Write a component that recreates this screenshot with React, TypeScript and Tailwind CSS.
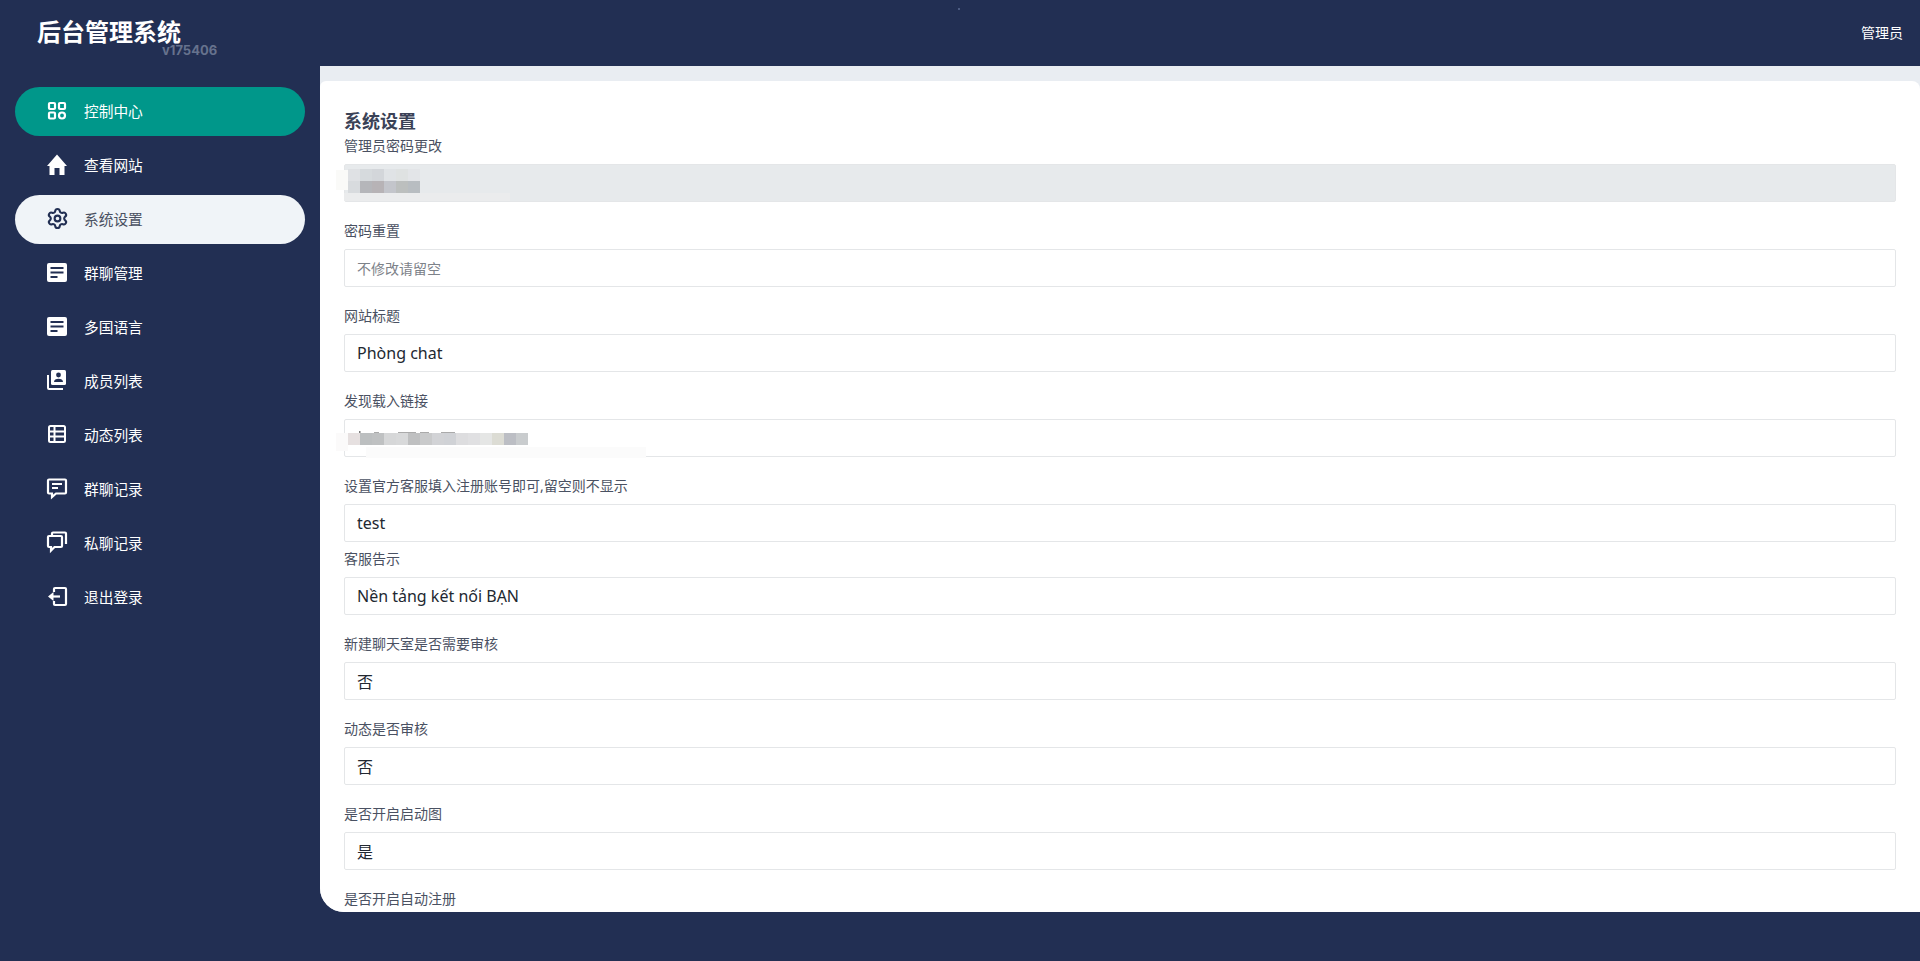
import { ReactNode } from "react";
import { Settings } from "lucide-react";

const NAVY = "#222f53";

function DashboardIcon() {
	return (
		<svg viewBox="0 0 24 24" fill="none" stroke="currentColor" strokeWidth="2.2" className="h-6 w-6">
			<rect x="4" y="3" width="6" height="6" rx="1" />
			<rect x="14" y="3" width="6" height="6" rx="1" />
			<rect x="4" y="12.5" width="6" height="6" rx="1" />
			<circle cx="17" cy="15.5" r="3" />
		</svg>
	);
}

function HomeIcon() {
	return (
		<svg viewBox="0 0 24 24" fill="currentColor" className="h-6 w-6">
			<path d="M9.5 21v-7h5v7h5v-9H22L12 .5 2 12h2.5v9z" />
		</svg>
	);
}

function ArticleIcon() {
	return (
		<svg viewBox="0 0 24 24" className="h-6 w-6">
			<rect x="2" y="1" width="20" height="19" rx="2" fill="currentColor" />
			<rect x="5.5" y="5" width="13" height="2" fill={NAVY} />
			<rect x="5.5" y="9.5" width="13" height="2" fill={NAVY} />
			<rect x="5.5" y="14" width="7" height="2" fill={NAVY} />
		</svg>
	);
}

function MembersIcon() {
	return (
		<svg viewBox="0 0 24 24" className="h-6 w-6">
			<path d="M3 5v13a1 1 0 0 0 1 1h14" fill="none" stroke="currentColor" strokeWidth="2" />
			<rect x="6" y="0" width="15" height="15" rx="1.5" fill="currentColor" />
			<circle cx="13.5" cy="5" r="2.4" fill={NAVY} />
			<path d="M9 12c0-2.2 2-3.2 4.500-3.200s4.500 1 4.500 3.200z" fill={NAVY} />
		</svg>
	);
}

function ListIcon() {
	return (
		<svg viewBox="0 0 24 24" fill="none" stroke="currentColor" strokeWidth="2" className="h-6 w-6">
			<rect x="4" y="2" width="16" height="16" rx="1.5" />
			<path d="M9.500 2v16" />
			<path d="M4 7.500h16M4 12.500h16" strokeWidth="1.800" />
		</svg>
	);
}

function ChatIcon() {
	return (
		<svg viewBox="0 0 24 24" fill="none" stroke="currentColor" strokeWidth="2.2" className="h-6 w-6">
			<path d="M4 1.500h16a1 1 0 0 1 1 1v12a1 1 0 0 1-1 1h-9l-4 3.500v-3.500H4a1 1 0 0 1-1-1v-12a1 1 0 0 1 1-1z" />
			<path d="M7 6h10M7 10h6" />
		</svg>
	);
}

function PrivateChatIcon() {
	return (
		<svg viewBox="0 0 24 24" fill="none" stroke="currentColor" strokeWidth="2.2" className="h-6 w-6 overflow-visible">
			<path d="M7 3V1.500a1 1 0 0 1 1-1h12a1 1 0 0 1 1 1V12" />
			<path d="M4 4h12a1 1 0 0 1 1 1v9a1 1 0 0 1-1 1H9.500L6 18.500V15H4a1 1 0 0 1-1-1V5a1 1 0 0 1 1-1z" />
		</svg>
	);
}

function LogoutIcon() {
	return (
		<svg viewBox="0 0 24 24" fill="none" stroke="currentColor" strokeWidth="2.2" className="h-6 w-6">
			<path d="M9 6V3a1 1 0 0 1 1-1h10a1 1 0 0 1 1 1v15a1 1 0 0 1-1 1H10a1 1 0 0 1-1-1v-3" />
			<path d="M15 10.500H7" />
			<path d="M8.500 6L3 10.500 8.500 15z" fill="currentColor" stroke="none" />
		</svg>
	);
}

const menu: { label: string; icon: ReactNode; state?: "primary" | "current" }[] = [
	{ label: "控制中心", icon: <DashboardIcon />, state: "primary" },
	{ label: "查看网站", icon: <HomeIcon /> },
	{ label: "系统设置", icon: <Settings className="h-[23px] w-[23px] -translate-y-px" strokeWidth={2.2} />, state: "current" },
	{ label: "群聊管理", icon: <ArticleIcon /> },
	{ label: "多国语言", icon: <ArticleIcon /> },
	{ label: "成员列表", icon: <MembersIcon /> },
	{ label: "动态列表", icon: <ListIcon /> },
	{ label: "群聊记录", icon: <ChatIcon /> },
	{ label: "私聊记录", icon: <PrivateChatIcon /> },
	{ label: "退出登录", icon: <LogoutIcon /> },
];

// pixelated patches that cover the password and the link
const passwordPatch = [
	["#dfe1e4", "#d6dadd", "#d3d6da", "#e0e3e6", "#dfe2e2", "#e3e5e8"],
	["#d8dbde", "#b5b6ba", "#b7b3b6", "#c3c5cb", "#bcbfbe", "#b8bdc1"],
];
const linkPatch = ["#e6e0e0", "#bcbfc0", "#bfc1c2", "#d6d7d8", "#d8d9da", "#bfc0c1", "#c9cacb", "#d2d3d6", "#d0d2d6", "#dddddf", "#e0e0e2", "#e5e6e5", "#dcdcd4", "#bcbec4", "#c9ccce"];

function PasswordMosaic() {
	return (
		<svg className="pointer-events-none absolute -left-2 top-0 h-[38px] w-[190px]" viewBox="0 0 190 38">
			<rect x="0" y="6" width="12" height="20" fill="#fafaf8" />
			<rect x="8" y="29" width="166" height="8" fill="#ebeced" />
			{passwordPatch.map((row, r) =>
				row.map((c, i) => <rect key={`${r}-${i}`} x={12 + i * 12} y={5 + r * 12} width="12" height="12" fill={c} />)
			)}
		</svg>
	);
}

function LinkMosaic() {
	return (
		<svg className="pointer-events-none absolute -left-2 top-0 h-[39px] w-[320px]" viewBox="0 0 320 39">
			<rect x="0" y="14" width="12" height="18" fill="#fbfafa" />
			<rect x="30" y="28" width="280" height="11" fill="#fbfbfb" />
			{linkPatch.map((c, i) => (
				<rect key={i} x={12 + i * 12} y="14" width="12" height="12" fill={c} />
			))}
			<rect x="23" y="12" width="1.500" height="2" fill="#777" />
			<rect x="38" y="13" width="5" height="1" fill="#aaa" />
			<rect x="62" y="13" width="18" height="1" fill="#aaa" />
			<rect x="84" y="13" width="9" height="1" fill="#aaa" />
			<rect x="105" y="13" width="14" height="1" fill="#aaa" />
		</svg>
	);
}

const fields: { label: string; value?: string; placeholder?: string; disabled?: boolean; mosaic?: ReactNode; tight?: boolean }[] = [
	{ label: "管理员密码更改", disabled: true, mosaic: <PasswordMosaic /> },
	{ label: "密码重置", placeholder: "不修改请留空" },
	{ label: "网站标题", value: "Phòng chat" },
	{ label: "发现载入链接", mosaic: <LinkMosaic /> },
	{ label: "设置官方客服填入注册账号即可,留空则不显示", value: "test", tight: true },
	{ label: "客服告示", value: "Nền tảng kết nối BẠN" },
	{ label: "新建聊天室是否需要审核", value: "否" },
	{ label: "动态是否审核", value: "否" },
	{ label: "是否开启启动图", value: "是" },
];

export default function App() {
	return (
		<div className="flex h-screen w-full overflow-hidden bg-[#222f53] font-['Noto_Sans','Noto_Sans_CJK_SC',sans-serif] text-sm">
			<aside className="w-[320px] shrink-0">
				<div className="relative h-[87px] pl-[37px] pt-[19px]">
					<div className="text-2xl font-bold leading-[26px] text-white">后台管理系统</div>
					<div className="absolute left-[162px] top-[45px] font-['Inter',sans-serif] text-[13px] font-bold leading-[11px] text-[#66728d]">v175406</div>
				</div>
				<nav className="flex flex-col gap-[5px] px-[15px]">
					{menu.map((item) => (
						<a
							key={item.label}
							href="#"
							className={
								"flex h-[49px] items-center gap-[15px] rounded-full pl-[30px] " +
								(item.state === "primary"
									? "bg-[#00978a] text-white"
									: item.state === "current"
										? "bg-[#f0f4f8] text-[#222f53]"
										: "text-white")
							}
						>
							<span className="flex h-6 w-6 items-center justify-center">{item.icon}</span>
							<span className={"text-[14.7px] " + (item.state === "current" ? "text-[#4a5162]" : "")}>{item.label}</span>
						</a>
					))}
				</nav>
			</aside>

			<div className="flex min-w-0 flex-1 flex-col pb-[49px]">
				<header className="relative flex h-[66px] shrink-0 items-center justify-end pr-[17px] text-white">
					<span className="absolute left-[638px] top-2 h-[2px] w-[2px] bg-[#4d5c82]"></span>
					管理员
				</header>
				<main className="min-h-0 flex-1 overflow-hidden rounded-bl-[24px] bg-[#e9edf2] pt-[15px]">
					<div className="h-full overflow-hidden rounded-tl-[6px] rounded-tr-[8px] bg-white px-6 pt-[27px]">
						<h2 className="text-lg font-bold leading-[27px] text-[#3a4256]">系统设置</h2>
						{fields.map((f) => (
							<div key={f.label} className={f.tight ? "mb-[6px]" : "mb-[18px]"}>
								<label className="mb-2 block leading-[21px] text-[#4a5162]">{f.label}</label>
								<div className="relative">
									<input
										readOnly
										disabled={f.disabled}
										value={f.value ?? ""}
										placeholder={f.placeholder}
										className={
											"block h-[38px] w-full rounded-[2px] border border-[#e4e6e8] px-3 text-base text-[#222831] outline-none placeholder:text-sm placeholder:text-[#7d8289] " +
											(f.disabled ? "bg-[#e7eaec]" : "bg-white")
										}
									/>
									{f.mosaic}
								</div>
							</div>
						))}
						<label className="block leading-[21px] text-[#4a5162]">是否开启自动注册</label>
					</div>
				</main>
			</div>
		</div>
	);
}
